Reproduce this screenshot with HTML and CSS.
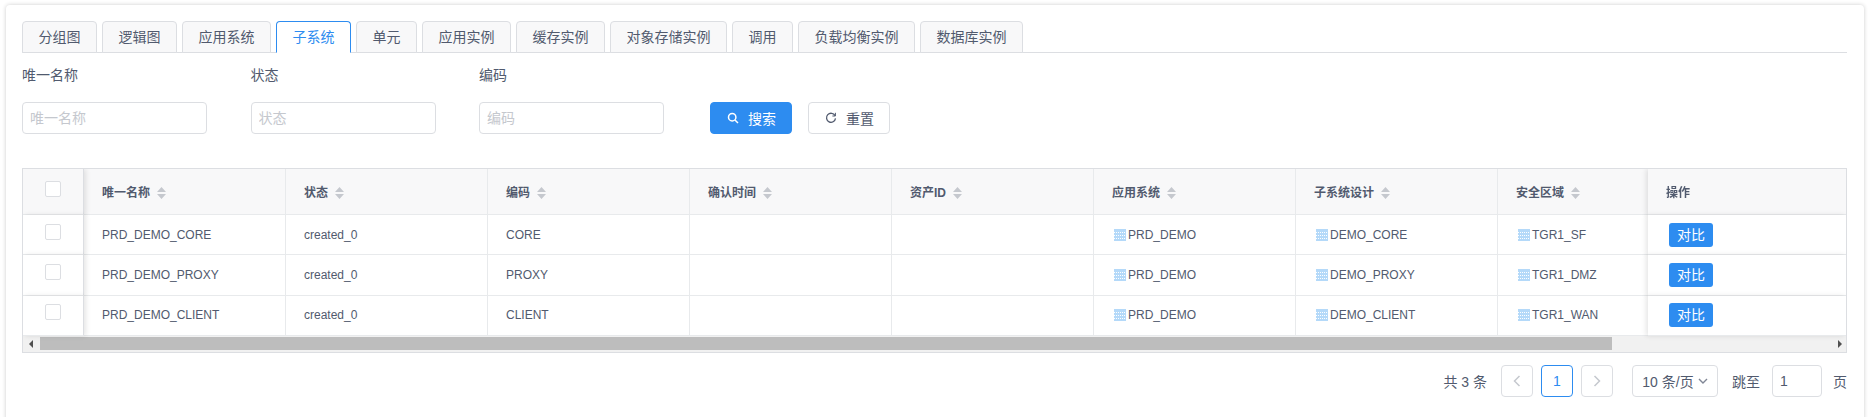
FILE: index.html
```html
<!DOCTYPE html>
<html>
<head>
    <title>子系统</title>
    <meta charset="utf-8">
    <link rel="stylesheet" href="styles.css">
</head>
<body>

<svg class="defs" width="0" height="0">
    <symbol id="sort" viewBox="0 0 9 12">
        <path d="M4.5 0 L9 5 H0 Z M0 7 H9 L4.5 12 Z" fill="#c5c8ce"/>
    </symbol>
    <symbol id="tbl" viewBox="0 0 12 12">
        <rect width="12" height="12" fill="#b4d9f9"/>
        <path d="M0 3.5 H12 M0 6.5 H12 M0 9.5 H12" stroke="#fff" stroke-width="1" stroke-dasharray="1 1"/>
    </symbol>
</svg>

<div class="card">
    <div class="tabs">
        <div class="tab">分组图</div>
        <div class="tab">逻辑图</div>
        <div class="tab">应用系统</div>
        <div class="tab active">子系统</div>
        <div class="tab">单元</div>
        <div class="tab">应用实例</div>
        <div class="tab">缓存实例</div>
        <div class="tab">对象存储实例</div>
        <div class="tab">调用</div>
        <div class="tab">负载均衡实例</div>
        <div class="tab">数据库实例</div>
    </div>

    <div class="filters">
        <div class="field">
            <label>唯一名称</label>
            <input type="text" placeholder="唯一名称">
        </div>
        <div class="field">
            <label>状态</label>
            <input type="text" placeholder="状态">
        </div>
        <div class="field">
            <label>编码</label>
            <input type="text" placeholder="编码">
        </div>
        <div class="actions">
            <button class="btn primary">
                <svg width="14" height="14" viewBox="0 0 14 14" fill="none" stroke="#fff" stroke-width="1.5"><circle cx="6.2" cy="6.2" r="3.7"/><path d="M9 9 L12 12"/></svg>
                搜索
            </button>
            <button class="btn">
                <svg width="14" height="14" viewBox="0 0 14 14" fill="none" stroke="#515a6e" stroke-width="1.3"><path d="M11 4.6 A4.5 4.5 0 1 0 11.5 7.4"/><path d="M11.4 1.8 V5 H8.4" stroke-width="1"/></svg>
                重置
            </button>
        </div>
    </div>

    <div class="table-wrap">
        <table>
            <colgroup>
                <col class="col-check">
                <col class="col"><col class="col"><col class="col"><col class="col">
                <col class="col"><col class="col"><col class="col"><col class="col">
                <col class="col-op">
            </colgroup>
            <thead>
                <tr>
                    <th class="cell-check"><span class="check"></span></th>
                    <th>唯一名称<svg class="sort"><use href="#sort"/></svg></th>
                    <th>状态<svg class="sort"><use href="#sort"/></svg></th>
                    <th>编码<svg class="sort"><use href="#sort"/></svg></th>
                    <th>确认时间<svg class="sort"><use href="#sort"/></svg></th>
                    <th>资产ID<svg class="sort"><use href="#sort"/></svg></th>
                    <th>应用系统<svg class="sort"><use href="#sort"/></svg></th>
                    <th>子系统设计<svg class="sort"><use href="#sort"/></svg></th>
                    <th>安全区域<svg class="sort"><use href="#sort"/></svg></th>
                    <th class="cell-op">操作</th>
                </tr>
            </thead>
            <tbody>
                <tr>
                    <td class="cell-check"><span class="check"></span></td>
                    <td>PRD_DEMO_CORE</td>
                    <td>created_0</td>
                    <td>CORE</td>
                    <td></td>
                    <td></td>
                    <td><svg class="tbl"><use href="#tbl"/></svg>PRD_DEMO</td>
                    <td><svg class="tbl"><use href="#tbl"/></svg>DEMO_CORE</td>
                    <td><svg class="tbl"><use href="#tbl"/></svg>TGR1_SF</td>
                    <td class="cell-op"><span class="compare">对比</span></td>
                </tr>
                <tr>
                    <td class="cell-check"><span class="check"></span></td>
                    <td>PRD_DEMO_PROXY</td>
                    <td>created_0</td>
                    <td>PROXY</td>
                    <td></td>
                    <td></td>
                    <td><svg class="tbl"><use href="#tbl"/></svg>PRD_DEMO</td>
                    <td><svg class="tbl"><use href="#tbl"/></svg>DEMO_PROXY</td>
                    <td><svg class="tbl"><use href="#tbl"/></svg>TGR1_DMZ</td>
                    <td class="cell-op"><span class="compare">对比</span></td>
                </tr>
                <tr>
                    <td class="cell-check"><span class="check"></span></td>
                    <td>PRD_DEMO_CLIENT</td>
                    <td>created_0</td>
                    <td>CLIENT</td>
                    <td></td>
                    <td></td>
                    <td><svg class="tbl"><use href="#tbl"/></svg>PRD_DEMO</td>
                    <td><svg class="tbl"><use href="#tbl"/></svg>DEMO_CLIENT</td>
                    <td><svg class="tbl"><use href="#tbl"/></svg>TGR1_WAN</td>
                    <td class="cell-op"><span class="compare">对比</span></td>
                </tr>
            </tbody>
        </table>
        <div class="scrollbar">
            <span class="arrow left"></span>
            <div class="thumb"></div>
            <span class="arrow right"></span>
        </div>
    </div>

    <div class="pager">
        <span class="total">共 3 条</span>
        <span class="page disabled">
            <svg width="8" height="12" viewBox="0 0 8 12" fill="none" stroke="#c5c8ce" stroke-width="1.5"><path d="M6.5 1 L1.5 6 L6.5 11"/></svg>
        </span>
        <span class="page current">1</span>
        <span class="page disabled">
            <svg width="8" height="12" viewBox="0 0 8 12" fill="none" stroke="#c5c8ce" stroke-width="1.5"><path d="M1.5 1 L6.5 6 L1.5 11"/></svg>
        </span>
        <span class="size">10 条/页
            <svg width="10" height="6" viewBox="0 0 10 6" fill="none" stroke="#808695" stroke-width="1.4"><path d="M1 1 L5 5 L9 1"/></svg>
        </span>
        <span class="jump">跳至</span>
        <input class="jump-input" type="text" value="1">
        <span class="jump-unit">页</span>
    </div>
</div>

</body>
</html>
```

FILE: styles.css
```css
body {
    margin: 0;
    background: #fff;
    color: #515a6e;
    font-family: "Liberation Sans", "Noto Sans CJK SC", sans-serif;
    font-size: 14px;
    overflow: hidden;
}

.defs {
    display: block;
}

.card {
    margin: 5px 6px 0 6px;
    padding: 16px 17px 40px 16px;
    background: #fff;
    border-radius: 4px;
    box-shadow: 0 0 4px rgba(0,0,0,0.2);
}

.tabs {
    display: flex;
    gap: 5px;
    height: 31px;
    border-bottom: 1px solid #dcdee2;
}

.tab {
    height: 32px;
    box-sizing: border-box;
    padding: 0 15.5px;
    line-height: 31px;
    background: #f8f8f9;
    border: 1px solid #dcdee2;
    border-radius: 4px 4px 0 0;
}

.tab.active {
    color: #2d8cf0;
    background: #fff;
    border-color: #2d8cf0;
    border-bottom-color: #fff;
}

.filters {
    display: flex;
    align-items: flex-end;
    gap: 43.5px;
    margin-top: 12px;
}

.field {
    display: flex;
    flex-direction: column;
    width: 185px;
}

.field label {
    line-height: 21px;
    margin-bottom: 16px;
}

input {
    box-sizing: border-box;
    height: 32px;
    padding: 0 7px;
    color: #515a6e;
    font: inherit;
    border: 1px solid #dcdee2;
    border-radius: 4px;
    outline: none;
}

input::placeholder {
    color: #c5c8ce;
}

.actions {
    display: flex;
    gap: 16px;
    margin-left: 2.5px;
}

.btn {
    display: flex;
    align-items: center;
    justify-content: center;
    gap: 8px;
    box-sizing: border-box;
    width: 82px;
    height: 32px;
    padding: 0;
    color: #515a6e;
    font: inherit;
    background: #fff;
    border: 1px solid #dcdee2;
    border-radius: 4px;
}

.btn.primary {
    color: #fff;
    background: #2d8cf0;
    border-color: #2d8cf0;
}

.table-wrap {
    margin-top: 34px;
    border: 1px solid #dcdee2;
    overflow: hidden;
}

table {
    width: 1875px;
    table-layout: fixed;
    border-collapse: separate;
    border-spacing: 0;
    font-size: 12px;
}

.col-check {
    width: 61px;
}

.col {
    width: 202px;
}

.col-op {
    width: 198px;
}

th, td {
    box-sizing: border-box;
    padding: 0 0 0 18px;
    text-align: left;
    white-space: nowrap;
    background: #fff;
    border-right: 1px solid #e8eaec;
    border-bottom: 1px solid #e8eaec;
}

th {
    height: 46px;
    font-weight: 700;
    background: #f8f8f9;
}

td {
    height: 40.33px;
}

.sort {
    width: 9px;
    height: 12px;
    margin-left: 7px;
    vertical-align: -2px;
}

.tbl {
    width: 12px;
    height: 12px;
    margin: 0 2px;
    vertical-align: -2px;
}

.cell-check {
    position: relative;
    z-index: 1;
    padding: 0;
    text-align: center;
    border-right-color: #dcdee2;
    box-shadow: 2px 0 5px rgba(0,0,0,0.1);
}

.check {
    display: block;
    box-sizing: border-box;
    width: 16px;
    height: 16px;
    margin: -6px auto 0 auto;
    background: #fff;
    border: 1px solid #dcdee2;
    border-radius: 2px;
}

.cell-op {
    position: sticky;
    right: 0;
    z-index: 1;
    border-right: none;
    box-shadow: -2px 0 5px rgba(0,0,0,0.1);
}

td.cell-op {
    padding-left: 21px;
}

.compare {
    display: inline-block;
    width: 44px;
    height: 24px;
    line-height: 24px;
    color: #fff;
    font-size: 14px;
    text-align: center;
    background: #2d8cf0;
    border-radius: 3px;
}

.scrollbar {
    display: flex;
    align-items: center;
    height: 16px;
    background: #f1f1f1;
}

.arrow {
    width: 0;
    height: 0;
    border-top: 4px solid transparent;
    border-bottom: 4px solid transparent;
}

.arrow.left {
    margin-left: 6px;
    border-right: 4px solid #505050;
}

.arrow.right {
    margin-left: 226px;
    border-left: 4px solid #505050;
}

.thumb {
    width: 1572px;
    height: 13px;
    margin-left: 7px;
    background: #bdbdbd;
}

.pager {
    display: flex;
    align-items: center;
    justify-content: flex-end;
    margin-top: 12px;
}

.total {
    margin-right: 14px;
}

.page {
    display: flex;
    align-items: center;
    justify-content: center;
    box-sizing: border-box;
    width: 32px;
    height: 32px;
    margin-right: 8px;
    background: #fff;
    border: 1px solid #dcdee2;
    border-radius: 4px;
}

.page.current {
    color: #2d8cf0;
    border-color: #2d8cf0;
}

.size {
    display: flex;
    align-items: center;
    justify-content: center;
    gap: 4px;
    box-sizing: border-box;
    width: 86px;
    height: 32px;
    margin-left: 11px;
    border: 1px solid #dcdee2;
    border-radius: 4px;
}

.jump {
    margin-left: 14px;
}

.jump-input {
    width: 50px;
    margin-left: 12px;
}

.jump-unit {
    margin-left: 11px;
}
```
